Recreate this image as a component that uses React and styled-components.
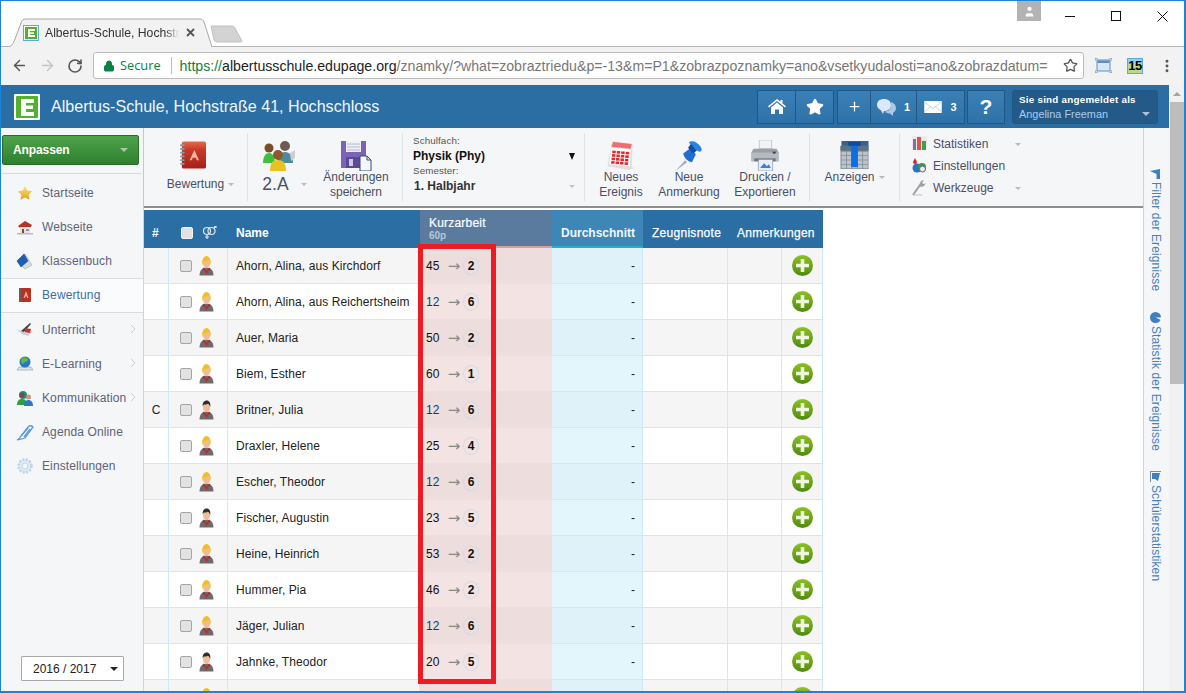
import React from 'react';
import styled, { createGlobalStyle } from 'styled-components';
import { Star, Plus, Lock, ArrowLeft, ArrowRight, RotateCw, EllipsisVertical, User } from 'lucide-react';

const Global = createGlobalStyle`
  html, body { margin: 0; padding: 0; overflow: hidden; }
  body { font-family: "Liberation Sans", Arial, sans-serif; background: #fff; }
  * { box-sizing: border-box; }
`;

const Window = styled.div`
  width: 1186px; height: 693px; border: 1px solid #1a84d8; border-right-width: 2px; border-bottom-width: 2px;
  display: flex; flex-direction: column; overflow: hidden; background: #fff; position: relative;
`;
const TabStrip = styled.div`
  height: 46px; flex: none; display: flex; align-items: flex-end; padding-left: 5px; position: relative;
  border-bottom: 1px solid #b6b6b6;
`;
const Tab = styled.div`
  position: relative; width: 206px; height: 29px; margin-bottom: -1px; display: flex; align-items: center;
  padding: 0 0 0 17px; font-size: 12.2px; color: #333; z-index: 1; flex: none;
`;
const TabShape = styled.svg` position: absolute; left: 0; top: 0; z-index: -1; `;
const TabTitle = styled.span`
  width: 134px; margin-left: 6px; white-space: nowrap; overflow: hidden;
  -webkit-mask-image: linear-gradient(90deg, #000 90%, transparent);
  mask-image: linear-gradient(90deg, #000 90%, transparent);
`;
const TabClose = styled.svg` margin-left: 7px; flex: none; `;
const NewTab = styled.svg` margin: 0 0 3px -2px; flex: none; `;
const WinButtons = styled.div`
  position: absolute; right: -1px; top: 0; display: flex; align-items: flex-start;
`;
const Profile = styled.div`
  width: 24px; height: 20px; background: #b3b3b3; color: #fff; display: flex; align-items: center; justify-content: center;
  margin-right: 6px;
`;
const WinBtn = styled.div`
  width: 46px; height: 30px; display: flex; align-items: center; justify-content: center; color: #111;
`;
const UrlRow = styled.div`
  height: 38px; flex: none; background: #f2f2f2; display: flex; align-items: flex-start; padding-top: 5px;
`;
const NavIcons = styled.div`
  width: 92px; height: 27px; flex: none; display: flex; align-items: center; justify-content: space-between; padding: 0 10px 0 10px;
`;
const UrlBox = styled.div`
  width: 991px; height: 27px; background: #fff; border: 1px solid #bdbdbd; border-radius: 3px;
  display: flex; align-items: center; padding: 0 5px 0 9px; white-space: nowrap; overflow: hidden; flex: none;
`;
const Secure = styled.span`
  color: #0b8043; margin-left: 5px; padding-right: 10px; border-right: 1px solid #bbb; line-height: 17px;
  font-family: "Open Sans", "Noto Sans", sans-serif; font-size: 12.8px;
`;
const Url = styled.span`
  color: #777; margin-left: 8px; flex: 1; overflow: hidden; font-size: 14.15px;
`;
const UrlScheme = styled.span` color: #0b8043; `;
const UrlHost = styled.span` color: #222; `;
const UrlStar = styled.span` display: flex; flex: none; margin-left: 6px; `;
const ExtIcons = styled.div` height: 27px; display: flex; align-items: center; flex: 1; padding-left: 11px; gap: 16px; `;
const ExtBadge = styled.div`
  width: 16px; height: 16px; background: linear-gradient(#8fd0ef 0 4px, #b6d98c 4px); border: 1px solid #5fa8d8;
  font-size: 13px; font-weight: 700; color: #000; display: flex; align-items: center; justify-content: center; margin-left: -1px; letter-spacing: -.5px;
`;

const Page = styled.div` flex: 1; display: flex; min-height: 0; `;
const MainCol = styled.div` flex: 1; display: flex; flex-direction: column; min-width: 0; `;
const Header = styled.div`
  height: 43px; flex: none; background: #2b6ea3; display: flex; align-items: center; padding-left: 13px; color: #fff;
`;
const LogoBox = styled.svg` flex: none; `;
const School = styled.div` font-size: 16.1px; margin-left: 11px; flex: 1; color: #f2f7fb; white-space: nowrap; `;
const HeaderBtns = styled.div` display: flex; align-items: center; margin-right: 11px; `;
const HGroup = styled.div` display: flex; margin-right: ${p => p.$mr}px; `;
const HBtn = styled.div`
  height: 34px; width: ${p => p.$w}px; background: linear-gradient(#3a7fb5, #2e72a8);
  border: 1px solid #1f5785; margin-left: -1px; display: flex; align-items: center; justify-content: center; gap: 8px;
  font-size: 11px; font-weight: 700; color: #fff; flex: none;
`;
const HelpBtn = styled(HBtn)` font-size: 21px; `;
const UserBox = styled.div`
  width: 146px; height: 34px; background: #235a88; border-radius: 3px; margin-left: 7px; padding: 2px 6px; position: relative; border: 1px solid #1f5785; flex: none;
`;
const UserTop = styled.div` font-size: 9.8px; font-weight: 700; color: #fff; letter-spacing: .25px; line-height: 13px; white-space: nowrap; `;
const UserName = styled.div` font-size: 10.9px; color: #a6cdf0; margin-top: 2px; line-height: 13px; white-space: nowrap; `;
const Caret = styled.span`
  display: inline-block; width: 0; height: 0; border-left: ${p => p.$s || 4}px solid transparent; border-right: ${p => p.$s || 4}px solid transparent;
  border-top: ${p => p.$h || p.$s || 4}px solid ${p => p.$c || '#b9b9b9'}; flex: none;
`;
const UserCaret = styled(Caret)` position: absolute; right: 7px; bottom: 7px; `;

const Body = styled.div` flex: 1; display: flex; min-height: 0; position: relative; `;
const Sidebar = styled.div`
  width: 143px; flex: none; background: #f5f6f8; border-right: 1px solid #d0d3d6; display: flex; flex-direction: column; padding-top: 7px;
`;
const GreenBtn = styled.div`
  width: 137px; height: 30px; margin-left: 1px; background: linear-gradient(#4ea34a, #2f8030); border: 1px solid #2a6d2a; border-radius: 2px;
  display: flex; align-items: center; justify-content: space-between; padding: 0 10px 0 10px; color: #fff; font-size: 12px; font-weight: 700; flex: none; letter-spacing: -.1px;
`;
const SideDivider = styled.div` height: 1px; background: #d6dade; margin: 8px 2px 2px 1px; flex: none; `;
const NavItem = styled.div`
  height: 34.15px; flex: none; display: flex; align-items: center; padding-left: 14px; font-size: 12px; letter-spacing: .12px; color: ${p => p.$active ? '#3a6fa5' : '#5d6378'};
  position: relative;
  ${p => p.$active ? 'background:#fafbfc;border-top:1px solid #d9dde0;border-bottom:1px solid #d9dde0;' : ''}
`;
const NavIcon = styled.span` width: 20px; height: 20px; flex: none; margin-right: 7px; display: flex; align-items: center; justify-content: center; `;
const Chevron = styled.svg` position: absolute; right: 7px; top: 11px; `;
const SideSpacer = styled.div` flex: 1; `;
const YearSelect = styled.div`
  width: 103px; height: 25px; margin: 0 0 10px 20px; border: 1px solid #a9a9a9; background: #fff; border-radius: 1px; display: flex; align-items: center;
  justify-content: space-between; padding: 0 5px 0 11px; font-size: 12px; color: #222; flex: none;
`;

const Center = styled.div` flex: 1; display: flex; flex-direction: column; min-width: 0; `;
const Toolbar = styled.div`
  height: 80px; flex: none; background: #f5f6f8; display: flex; align-items: stretch; padding: 5px 0; border-bottom: 2px solid #8d8d8d;
  box-shadow: 0 1px 2px rgba(0,0,0,.15);
`;
const ToolGroup = styled.div`
  display: flex; width: ${p => p.$w}px; flex: none; border-right: 1px solid #e0e2e4; justify-content: flex-start;
`;
const Tool = styled.div`
  width: ${p => p.$w}px; flex: none; display: flex; flex-direction: column; align-items: center; font-size: 12px; color: #4a4f66; text-align: center;
`;
const ToolIcon = styled.div`
  height: 29px; display: flex; align-items: center; justify-content: center; flex: none; margin: 8px ${p => p.$mr || 0}px 0 0;
`;
const ToolLabel = styled.div`
  display: flex; align-items: center; justify-content: center; gap: ${p => p.$gap ?? 4}px; white-space: nowrap;
  margin: ${p => p.$mt || 0}px 0 0 ${p => p.$ml || 0}px; font-size: ${p => p.$fs || 12}px; line-height: ${p => p.$lh || 15}px;
`;
const SubjectBox = styled.div` width: 182px; padding: 2px 8px 0 10px; flex: none; border-right: 1px solid #e0e2e4; `;
const SmallLabel = styled.div` font-size: 9.8px; color: #555; line-height: 12px; letter-spacing: .1px; `;
const SubjectVal = styled.div`
  font-size: 12px; font-weight: 700; color: ${p => p.$c || '#111'}; line-height: 18px; display: flex; justify-content: space-between; align-items: center; padding-left: ${p => p.$pl || 0}px; padding-right: 1px;
`;
const MenuList = styled.div` padding: 0 0 0 12px; width: 130px; display: flex; flex-direction: column; `;
const MenuRow = styled.div` height: 22px; display: flex; align-items: center; font-size: 12px; color: #4a4f66; `;
const MenuIcon = styled.span` width: 16px; height: 16px; display: flex; margin-right: 5px; flex: none; `;
const MenuText = styled.span` width: 82px; flex: none; `;

const Content = styled.div` flex: 1; background: #fff; padding-top: 2px; position: relative; overflow: hidden; min-height: 0; `;
const Table = styled.div`
  width: 679px; display: grid; grid-template-columns: 25px 59px 192px 132px 91px 85px 54px 41px;
`;
const TH = styled.div`
  height: 38px; background: ${p => p.$bg || '#2b6ea3'}; color: ${p => p.$c || '#fff'}; font-size: 12px; font-weight: ${p => p.$light ? 400 : 700}; display: flex; align-items: center;
  padding-left: ${p => p.$pl ?? 8}px; padding-top: 9px; white-space: nowrap; border-bottom: 2px solid ${p => p.$bb || '#2b6ea3'};
  gap: ${p => p.$gap || 0}px;
  ${p => p.$light ? 'letter-spacing: .28px; -webkit-text-stroke: .25px #fff;' : ''}
`;
const THSpan = styled(TH)` grid-column: ${p => p.$span}; `;
const THStack = styled(TH)`
  flex-direction: column; align-items: flex-start; justify-content: flex-start; padding-top: 7px; padding-left: 9px; font-weight: 400; font-size: 12px; line-height: 12px;
  letter-spacing: .2px; -webkit-text-stroke: .2px #fff;
`;
const ThSub = styled.div` font-size: 10px; color: #b7c7d7; font-weight: 700; margin-top: 1px; line-height: 12px; letter-spacing: 0; -webkit-text-stroke: 0; `;
const Cbx = styled.span`
  width: 12px; height: 12px; border-radius: 2px; background: #e2e2e2; border: 1px solid ${p => p.$h ? '#f3f3f3' : '#a5a5a5'}; flex: none; display: inline-block;
`;
const TD = styled.div`
  height: 36px; background: ${p => p.$bg}; border-right: 1px solid #cfe8fb; border-bottom: 1px solid #cfe8fb; font-size: 12px; color: #222; display: flex; align-items: center;
  justify-content: ${p => p.$j || 'flex-start'}; padding: ${p => p.$p || '0'}; white-space: nowrap; gap: ${p => p.$gap || 0}px;
  overflow: hidden; letter-spacing: ${p => p.$ls || 0}px;
`;
const GradeCell = styled(TD)` border-right: 0; padding-left: 6px; color: #111; `;
const Pts = styled.span` width: 19px; color: ${p => p.$low ? '#123a66' : '#111'}; `;
const Arrow = styled.span` color: #888; width: 18px; font-family: "DejaVu Sans", sans-serif; font-size: 15px; text-align: center; line-height: 14px; `;
const Grade = styled.span`
  width: 16px; height: 18px; border: 1px solid #cfdbe8; border-radius: 50%; font-weight: 700; font-size: 12px; display: flex; align-items: center; justify-content: center; flex: none;
`;
const RedBox = styled.div`
  position: absolute; left: 274px; top: 36px; width: 78px; height: 440px; border: 5px solid #ed1c24; pointer-events: none;
`;
const RightPanel = styled.div`
  width: 26px; flex: none; background: #f5f6f8; border-left: 1px solid #d0d3d6; display: flex; flex-direction: column; align-items: center; padding: 41px 2px 0 0;
`;
const VTab = styled.div`
  writing-mode: vertical-rl; font-size: 12px; color: #4b7fb8; display: flex; align-items: center; gap: 3px; margin-bottom: ${p => p.$mb}px; white-space: nowrap; flex: none; letter-spacing: .12px;
`;
const VIcon = styled.svg` flex: none; `;
const Scrollbar = styled.div` width: 15px; flex: none; background: #f1f1f1; display: flex; flex-direction: column; align-items: flex-end; `;
const ScrollUp = styled.div` height: 17px; width: 14px; display: flex; align-items: center; justify-content: center; flex: none; `;
const UpArrow = styled.span` width: 0; height: 0; border-left: 4px solid transparent; border-right: 4px solid transparent; border-bottom: 4px solid #a3a3a3; `;
const Thumb = styled.div` width: 14px; height: 282px; background: #bdbdbd; flex: none; `;

const Logo = () => (
  <LogoBox width="26" height="26" viewBox="0 0 26 26">
    <rect width="26" height="26" rx="1" fill="#fff" />
    <rect x="2" y="2" width="22" height="22" rx="1" fill="#54b12d" />
    <path d="M7 5h13v4h-8v2.500h7v3.500h-7v3h8v4H7z" fill="#fff" />
  </LogoBox>
);

const StarIco = () => <svg width="16" height="16" viewBox="0 0 16 16"><defs><linearGradient id="gs" x1="0" y1="0" x2="0" y2="1"><stop offset="0" stopColor="#ffe27a"/><stop offset="1" stopColor="#e0a21c"/></linearGradient></defs><path d="M8 1l2.200 4.600 5 .7-3.600 3.500.9 5L8 12.400 3.500 14.800l.9-5L.8 6.300l5-.7z" fill="url(#gs)"/></svg>;
const HouseIco = () => <svg width="16" height="16" viewBox="0 0 16 16"><path d="M1 7l7-5 7 4-2 3H3z" fill="#b5312b"/><path d="M3 8h10v6H3z" fill="#e8e2da"/><path d="M5 10h2v4H5z" fill="#7a4d3a"/><path d="M9 10h3v2H9z" fill="#7f9ab5"/><path d="M0 14h16v1.500H0z" fill="#b8bcc0"/></svg>;
const BookIco = () => <svg width="18" height="18" viewBox="0 0 18 18"><path d="M1 9l8-7 7 11-7 4z" fill="#d7dde2" stroke="#9aa4ad" strokeWidth=".6"/><path d="M1 9l7-7 4 7-7 6z" fill="#1a5fb4" stroke="#123f7c" strokeWidth=".5"/></svg>;
const RedBook = () => <svg width="12" height="14" viewBox="0 0 12 14"><rect width="12" height="14" rx="1" fill="#b8301f"/><rect width="2" height="14" fill="#6e5a55"/><path d="M7 3l2.500 7H8.200L7.700 8.500H6.300L5.800 10H4.500z" fill="#f4b19a"/></svg>;
const LessonIco = () => <svg width="18" height="16" viewBox="0 0 18 16"><path d="M1 7l7 3 9-1-5 5-6-2z" fill="#c9ced3"/><path d="M5 9l9-8 1 1-7 8z" fill="#444"/><path d="M9 6l6 1-1 4-5-1z" fill="#c3323a"/></svg>;
const GlobeIco = () => <svg width="18" height="18" viewBox="0 0 18 18"><path d="M1 15l2-3h12l2 3z" fill="#dfe4e9" stroke="#8e98a3" strokeWidth=".6"/><circle cx="9" cy="7" r="5.500" fill="#2477c9"/><path d="M6 3c3-1 6 0 6 2s-3 1-4 3-3 0-3-2z" fill="#63b83a"/></svg>;
const CommIco = () => <svg width="18" height="18" viewBox="0 0 18 18"><circle cx="7" cy="6" r="4" fill="#1c8f8a"/><circle cx="6" cy="6" r="2.500" fill="#7a4d3a"/><path d="M1 16c0-4 2-6 5-6s5 2 5 6z" fill="#2f9e3f"/><circle cx="12.500" cy="8" r="2.500" fill="#c99775"/><path d="M8 17c0-4 2-6 4.500-6s4.500 2 4.500 6z" fill="#2d76c9"/></svg>;
const PenIco = () => <svg width="18" height="18" viewBox="0 0 18 18" fill="none" stroke="#5b9bd8" strokeWidth="1.300"><path d="M1 17c2-1 3-2 4-4l7-9c2-2 4-1 5 0l-8 11c-2 1-5 1-8 2z"/><path d="M5 13l7-8M8 14l6-8"/></svg>;
const GearIco = () => <svg width="18" height="18" viewBox="0 0 18 18"><circle cx="9" cy="9" r="6.500" fill="#dfeaf5" stroke="#b9d2e8" strokeWidth="2.400" strokeDasharray="2 1.400"/><circle cx="9" cy="9" r="3" fill="#f5f6f8" stroke="#c5d8ea"/></svg>;

const AddressBook = () => (
  <svg width="26" height="29" viewBox="0 0 28 30">
    <defs><linearGradient id="ab" x1="0" y1="0" x2="0" y2="1"><stop offset="0" stopColor="#e5694a"/><stop offset=".3" stopColor="#c93a27"/><stop offset="1" stopColor="#a5201a"/></linearGradient></defs>
    <rect x="2" y="0" width="26" height="29" rx="2" fill="url(#ab)"/>
    {[3, 7, 11, 15, 19, 23].map(y => <rect key={y} x="0" y={y} width="5" height="2" rx="1" fill="#8c97a5"/>)}
    <path d="M15.500 9l5 11h-2.400l-1-2.500h-3.400l-1 2.500h-2.400z" fill="#f0b89f"/>
  </svg>
);
const People = () => (
  <svg width="32" height="32" viewBox="0 0 32 30">
    <circle cx="22" cy="5" r="5" fill="#6e5a50"/><path d="M14 22c0-7 3-11 8-11s8 4 8 11z" fill="#4d8aa0"/>
    <path d="M27 12l5-3v8l-4 3z" fill="#c9ced2"/>
    <circle cx="6" cy="7" r="4.500" fill="#7a4d2a"/><path d="M0 22c0-7 3-10 6-10s6 3 6 10z" fill="#3fc03b"/>
    <circle cx="15" cy="14" r="5" fill="#8a5a30"/><path d="M7 30c0-8 3-11 8-11s8 3 8 11z" fill="#e8c320"/>
  </svg>
);
const Floppy = () => (
  <svg width="32" height="30" viewBox="0 0 32 30">
    <path d="M1 0h25v24l-3 3H1z" fill="#7b64b5"/><rect x="6" y="0" width="15" height="11" fill="#eef0f4"/>
    <path d="M7 3h13M7 6h13M7 9h13" stroke="#b8bcc8"/><rect x="6" y="16" width="14" height="11" fill="#5d4a96"/><rect x="9" y="18" width="4" height="7" fill="#cfc7e6"/>
    <path d="M20 15h7l4 4v11H20z" fill="#f3f6fb" stroke="#3c4a70"/><path d="M27 15v4h4" fill="none" stroke="#3c4a70"/>
  </svg>
);
const Calendar = () => (
  <svg width="30" height="31" viewBox="0 0 30 32">
    <path d="M6 1l21 3-1 24 3 1-6 2L1 27z" fill="#dfe0de"/>
    <path d="M7 2l19 2-1 5L5 7z" fill="#ef6d72"/>
    <path d="M5 8l20 2-1 17-21-2z" fill="#fff"/>
    {[0, 1, 2, 3].map(r => [0, 1, 2, 3].map(c => <rect key={r + '-' + c} x={6 + c * 4.600 - r * .4} y={11 + r * 3.600 + c * .4} width="3.600" height="2.700" fill="#e02a31"/>))}
  </svg>
);
const Pin = () => (
  <svg width="28" height="31" viewBox="0 0 28 32">
    <path d="M0 32l10-11 2 2z" fill="#a9adb1"/>
    <path d="M8 14l8-6 5 7-4 8c-3 0-8-4-9-9z" fill="#1f6fd0"/>
    <path d="M14 2c3-2 9 0 12 5 2 3 1 5-1 5s-9-5-11-10z" fill="#2a83e0"/>
    <path d="M16 4l6 7-4 3-5-6z" fill="#114f9f"/>
  </svg>
);
const Printer = () => (
  <svg width="30" height="31" viewBox="0 0 30 32">
    <rect x="9" y="0" width="13" height="9" fill="#f2f3f4" stroke="#aab0b6" strokeWidth=".6"/>
    <path d="M3 9h24l2 4v9H1v-9z" fill="#9aa0a6"/>
    <rect x="1" y="13" width="28" height="9" fill="#b5babf"/><rect x="4" y="19" width="22" height="3" fill="#6c7278"/>
    <rect x="23" y="12" width="3" height="2" fill="#3c4043"/>
    <rect x="8" y="20" width="15" height="12" fill="#e9eef5" stroke="#6b8ab5" strokeWidth=".6"/>
    <path d="M10 29l4-5 3 3 2-2 2 4z" fill="#3d7fd4"/>
  </svg>
);
const TableIco = () => (
  <svg width="29" height="29" viewBox="0 0 29 30">
    <rect x="1" y="0" width="28" height="6" fill="#3b5f8f"/><rect y="5" width="29" height="24" fill="#7e8892"/>
    <rect y="5" width="29" height="5" fill="#5d7185"/>
    {[0, 1, 2, 3].map(r => [0, 1, 2, 3, 4].map(c => <rect key={r + 'x' + c} x={1 + c * 5.600} y={11 + r * 4.500} width="4.800" height="3.800" fill="#bcc4cb"/>))}
    <rect x="11" y="2" width="7" height="25" fill="#0b6fe0"/>
    <rect x="8" y="1" width="13" height="4" fill="#0b4ea0"/>
  </svg>
);
const Bars = () => <svg width="15" height="14" viewBox="0 0 15 14"><rect width="15" height="14" fill="#e9eaec"/><rect x="1" y="3" width="3" height="11" fill="#8b6aa8"/><rect x="5" y="1" width="4" height="13" fill="#d9534f"/><rect x="10" y="5" width="4" height="9" fill="#3f9e53"/></svg>;
const Settings2 = () => <svg width="15" height="15" viewBox="0 0 15 15"><path d="M3 0l2 4a2 2 0 1 1-4 0z" fill="#d9232c"/><circle cx="5" cy="10" r="4.500" fill="#2c72c7"/><circle cx="10" cy="9" r="4" fill="#3e9b47"/><circle cx="10.500" cy="11" r="3" fill="#e8eaec" stroke="#666"/></svg>;
const Wrench = () => <svg width="14" height="16" viewBox="0 0 14 16" fill="none"><path d="M1 15L8 5" stroke="#9c9fa3" strokeWidth="2"/><path d="M7 5l2-4 3-1-2 3 2 1 2-1-2 3-3 1z" fill="#9c9fa3"/><path d="M1 15h9" stroke="#c0c2c5"/></svg>;

const Student = ({ g }) => (
  <svg width="15" height="20" viewBox="0 0 15 20">
    <path d="M.5 19.500c0-5 2.500-8 7-8s7 3 7 8z" fill="#6c6c6c"/>
    <ellipse cx="7.500" cy="7" rx="3.500" ry="4.500" fill="#eebd95"/>
    <path d="M4.500 11.500l3 3.500 3-3.500 1 2-2.800 2-1.200 3-1.200-3-2.800-2z" fill="#c8202c"/>
    {g === 'm'
      ? <path d="M3.800 7C3 2.500 5.500.5 7.800.5s4.200 2.300 3.400 6.500c-.5-2-1.500-3-2.500-3.300-1 .6-2.700.9-3.700.9-.7.5-1.200 1.400-1.700 2.400z" fill="#2c2c2c"/>
      : <path d="M3.500 9.500C2.300 3.500 5 0 7.500 0s5.200 3.500 4 9.500c-.3-2.800-1.300-5-2.300-5.700-1 1-3 1.500-4.200 1.700-.7.800-1.200 2.300-1.500 4z" fill="#f0c020"/>}
  </svg>
);
const PlusBtn = () => (
  <svg width="21" height="21" viewBox="0 0 21 21">
    <defs><linearGradient id="pg" x1="0" y1="0" x2="0" y2="1"><stop offset="0" stopColor="#8dc21f"/><stop offset="1" stopColor="#4f8a12"/></linearGradient></defs>
    <circle cx="10.500" cy="10.500" r="10.500" fill="url(#pg)"/>
    <path d="M8.700 4h3.600v4.700H17v3.600h-4.700V17H8.700v-4.700H4V8.700h4.700z" fill="#eef6dd"/>
  </svg>
);
const HomeIco = () => <svg width="18" height="15" viewBox="0 0 18 15"><path d="M9 0l3.500 2.800V1h2v3.400L18 7.300l-1 1.200L9 2 1 8.500 0 7.300z" fill="#fff"/><path d="M3 8.500L9 3.500l6 5V15h-4v-4.500H7V15H3z" fill="#fff"/></svg>;
const Chat = () => <svg width="19" height="18" viewBox="0 0 19 18"><path d="M7 1c4 0 7 2 7 6s-3 6-7 6l-1 3-2-3.500C2 11 0 9.500 0 7c0-4 3-6 7-6z" fill="#dbe9f6"/><path d="M14 4c3 1 5 3 5 6s-2 4-3 5v3l-3-2.500c-2 0-4-.5-5-2 4 0 7-3 6-9.500z" fill="#a9c9e6"/></svg>;
const Mail = () => <svg width="18" height="12" viewBox="0 0 19 13"><rect width="19" height="13" fill="#fff"/><path d="M0 1l9.500 7L19 1M0 12l7-6M19 12l-7-6" fill="none" stroke="#a9c5df" strokeWidth=".8"/></svg>;

const rows = [
  ['', 'f', 'Ahorn, Alina, aus Kirchdorf', 45, 2],
  ['', 'f', 'Ahorn, Alina, aus Reichertsheim', 12, 6],
  ['', 'f', 'Auer, Maria', 50, 2],
  ['', 'f', 'Biem, Esther', 60, 1],
  ['C', 'm', 'Britner, Julia', 12, 6],
  ['', 'f', 'Draxler, Helene', 25, 4],
  ['', 'f', 'Escher, Theodor', 12, 6],
  ['', 'm', 'Fischer, Augustin', 23, 5],
  ['', 'f', 'Heine, Heinrich', 53, 2],
  ['', 'f', 'Hummer, Pia', 46, 2],
  ['', 'f', 'Jäger, Julian', 12, 6],
  ['', 'm', 'Jahnke, Theodor', 20, 5],
  ['', 'f', '', null, null],
];

const navItems = [
  ['Startseite', <StarIco />], ['Webseite', <HouseIco />], ['Klassenbuch', <BookIco />],
  ['Bewertung', <RedBook />, false, true], ['Unterricht', <LessonIco />, true], ['E-Learning', <GlobeIco />, true],
  ['Kommunikation', <CommIco />, true], ['Agenda Online', <PenIco />], ['Einstellungen', <GearIco />],
];

export default function App() {
  return (
    <Window>
      <Global />
      <TabStrip>
        <Tab>
          <TabShape width="206" height="29" viewBox="0 0 206 29">
            <path d="M0 29C6 29 7 26 9 21L15 5C16 2 17 1 20 1H194C196 1 197 2 198 4L206 29" fill="#f2f2f2" stroke="#a8a8a8" />
          </TabShape>
          <svg width="16" height="16" viewBox="0 0 16 16"><rect width="16" height="16" fill="#5aa9e6"/><rect x="1" y="1" width="14" height="14" fill="#fff"/><rect x="2" y="2" width="12" height="12" fill="#54b12d"/><path d="M5 4h7v2H7v1.200h4V9H7v1h5v2H5z" fill="#fff"/></svg>
          <TabTitle>Albertus-Schule, Hochstraße 41</TabTitle>
          <TabClose width="9" height="9" viewBox="0 0 9 9"><path d="M1 1l7 7M8 1L1 8" stroke="#555" strokeWidth="1.800"/></TabClose>
        </Tab>
        <NewTab width="33" height="18" viewBox="0 0 33 18"><path d="M1 1h21q2 0 3 2l7 13q0 1-2 1H7q-2 0-3-2z" fill="#d3d3d3" stroke="#c2c2c2"/></NewTab>
        <WinButtons>
          <Profile><User size={13} fill="#fff" strokeWidth={0} /></Profile>
          <WinBtn><svg width="10" height="10" viewBox="0 0 10 10"><path d="M0 5.500h10" stroke="#111"/></svg></WinBtn>
          <WinBtn><svg width="10" height="10" viewBox="0 0 10 10"><rect x=".5" y=".5" width="9" height="9" fill="none" stroke="#111"/></svg></WinBtn>
          <WinBtn><svg width="11" height="11" viewBox="0 0 11 11"><path d="M.5.5l10 10M10.500.5l-10 10" stroke="#111"/></svg></WinBtn>
        </WinButtons>
      </TabStrip>
      <UrlRow>
        <NavIcons>
          <ArrowLeft size={17} color="#555" strokeWidth={2} />
          <ArrowRight size={17} color="#c4c4c4" strokeWidth={2} />
          <RotateCw size={16} color="#555" strokeWidth={2.400} />
        </NavIcons>
        <UrlBox>
          <Lock size={12} color="#0b8043" fill="#0b8043" />
          <Secure>Secure</Secure>
          <Url><UrlScheme>https://</UrlScheme><UrlHost>albertusschule.edupage.org</UrlHost>/znamky/?what=zobraztriedu&amp;p=-13&amp;m=P1&amp;zobrazpoznamky=ano&amp;vsetkyudalosti=ano&amp;zobrazdatum=</Url>
          <UrlStar><Star size={15} color="#555" strokeWidth={2} /></UrlStar>
        </UrlBox>
        <ExtIcons>
          <svg width="17" height="15" viewBox="0 0 17 15" fill="none"><rect x="2" y="2" width="13" height="11" fill="#d6e8f7" stroke="#5f8fbd"/><rect x="2.500" y="2.500" width="12" height="2.500" fill="#5f8fbd"/><path d="M0 3V0h3M14 0h3v3M0 12v3h3M17 12v3h-3" stroke="#5f8fbd"/></svg>
          <ExtBadge>15</ExtBadge>
          <EllipsisVertical size={16} color="#555" strokeWidth={2.400} />
        </ExtIcons>
      </UrlRow>
      <Page>
        <MainCol>
          <Header>
            <Logo />
            <School>Albertus-Schule, Hochstraße 41, Hochschloss</School>
            <HeaderBtns>
              <HGroup $mr={4}>
                <HBtn $w={39}><HomeIco /></HBtn>
                <HBtn $w={39}><Star size={18} fill="#fff" color="#fff" /></HBtn>
              </HGroup>
              <HGroup $mr={3}>
                <HBtn $w={34}><Plus size={15} color="#fff" strokeWidth={2} /></HBtn>
                <HBtn $w={47}><Chat />1</HBtn>
                <HBtn $w={49}><Mail />3</HBtn>
              </HGroup>
              <HelpBtn $w={38}>?</HelpBtn>
              <UserBox>
                <UserTop>Sie sind angemeldet als</UserTop>
                <UserName>Angelina Freeman</UserName>
                <UserCaret $c="#a9c3da" />
              </UserBox>
            </HeaderBtns>
          </Header>
          <Body>
            <Sidebar>
              <GreenBtn>Anpassen<Caret $c="#a8c8a8" /></GreenBtn>
              <SideDivider />
              {navItems.map(([label, icon, chev, active]) => (
                <NavItem key={label} $active={active}>
                  <NavIcon>{icon}</NavIcon>{label}
                  {chev && <Chevron width="6" height="10" viewBox="0 0 6 10"><path d="M1 1l4 4-4 4" fill="none" stroke="#c9ccd0" /></Chevron>}
                </NavItem>
              ))}
              <SideSpacer />
              <YearSelect>2016 / 2017<Caret $s={4} $c="#222" /></YearSelect>
            </Sidebar>
            <Center>
              <Toolbar>
                <ToolGroup $w={104}>
                  <Tool $w={103}>
                    <ToolIcon $mr={6}><AddressBook /></ToolIcon>
                    <ToolLabel $mt={7} $ml={10}>Bewertung<Caret $s={3.500} /></ToolLabel>
                  </Tool>
                </ToolGroup>
                <ToolGroup $w={155}>
                  <Tool $w={62}>
                    <ToolIcon><People /></ToolIcon>
                    <ToolLabel $fs={17.5} $lh={18} $mt={5} $ml={11} $gap={12}>2.A<Caret $s={3.500} /></ToolLabel>
                  </Tool>
                  <Tool $w={92}>
                    <ToolIcon><Floppy /></ToolIcon>
                    <ToolLabel>Änderungen</ToolLabel>
                    <ToolLabel>speichern</ToolLabel>
                  </Tool>
                </ToolGroup>
                <SubjectBox>
                  <SmallLabel>Schulfach:</SmallLabel>
                  <SubjectVal>Physik (Phy)<Caret $s={3.500} $h={7} $c="#111" /></SubjectVal>
                  <SmallLabel>Semester:</SmallLabel>
                  <SubjectVal $c="#333" $pl={1}>1. Halbjahr<Caret $s={3.500} $c="#c4c4c4" /></SubjectVal>
                </SubjectBox>
                <ToolGroup $w={225}>
                  <Tool $w={72}>
                    <ToolIcon><Calendar /></ToolIcon>
                    <ToolLabel>Neues</ToolLabel><ToolLabel>Ereignis</ToolLabel>
                  </Tool>
                  <Tool $w={64}>
                    <ToolIcon><Pin /></ToolIcon>
                    <ToolLabel>Neue</ToolLabel><ToolLabel>Anmerkung</ToolLabel>
                  </Tool>
                  <Tool $w={88}>
                    <ToolIcon><Printer /></ToolIcon>
                    <ToolLabel>Drucken /</ToolLabel><ToolLabel>Exportieren</ToolLabel>
                  </Tool>
                </ToolGroup>
                <ToolGroup $w={90}>
                  <Tool $w={89}>
                    <ToolIcon><TableIco /></ToolIcon>
                    <ToolLabel $mt={0}>Anzeigen<Caret $s={3.500} /></ToolLabel>
                  </Tool>
                </ToolGroup>
                <MenuList>
                  <MenuRow><MenuIcon><Bars /></MenuIcon><MenuText>Statistiken</MenuText><Caret $s={3.500} /></MenuRow>
                  <MenuRow><MenuIcon><Settings2 /></MenuIcon><MenuText>Einstellungen</MenuText></MenuRow>
                  <MenuRow><MenuIcon><Wrench /></MenuIcon><MenuText>Werkzeuge</MenuText><Caret $s={3.500} /></MenuRow>
                </MenuList>
              </Toolbar>
              <Content>
                <Table>
                  <TH>#</TH>
                  <TH $pl={12} $gap={9}>
                    <Cbx $h />
                    <svg width="15" height="13" viewBox="0 0 15 13" fill="none" stroke="#dfe9f2" strokeWidth="1.200"><circle cx="5" cy="5" r="3.500"/><circle cx="9.500" cy="5" r="3.500"/><path d="M5 8.500V13M3 11h4M12 2l2-2m-2 0h2v2"/></svg>
                  </TH>
                  <TH>Name</TH>
                  <THStack $bg="#5a7a9e" $bb="#e09a9a">Kurzarbeit<ThSub>60p</ThSub></THStack>
                  <TH $bg="#3d86b5" $bb="#1fb0cf" $c="#f2f7fb" $pl={9}>Durchschnitt</TH>
                  <TH $light $pl={9}>Zeugnisnote</TH>
                  <THSpan $span="span 2" $pl={9} $light>Anmerkungen</THSpan>
                  {rows.map(([tag, g, name, pts, grade], i) => {
                    const odd = i % 2 === 0;
                    const base = odd ? '#f5f5f5' : '#fff';
                    return (
                      <React.Fragment key={i}>
                        <TD $bg={base} $j="center">{tag}</TD>
                        <TD $bg={base} $p="0 0 0 11px" $gap={7}><Cbx /><Student g={g} /></TD>
                        <TD $bg={base} $p="0 0 0 8px" $ls={0.09}>{name}</TD>
                        <GradeCell $bg={odd ? '#eddddd' : '#f3e3e3'}>
                          {pts != null && <><Pts $low={pts < 20}>{pts}</Pts><Arrow>→</Arrow><Grade>{grade}</Grade></>}
                        </GradeCell>
                        <TD $bg={odd ? '#dff2f9' : '#e3f6fc'} $j="flex-end" $p="0 7px 0 0">{pts != null && '-'}</TD>
                        <TD $bg={base} />
                        <TD $bg={base} />
                        <TD $bg={base} $j="center"><PlusBtn /></TD>
                      </React.Fragment>
                    );
                  })}
                </Table>
                <RedBox />
              </Content>
            </Center>
            <RightPanel>
              <VTab $mb={21}><VIcon width="11" height="10" viewBox="0 0 11 10"><path d="M0 2L10 0v10H6.500V5z" fill="#3f7fc0"/></VIcon>Filter der Ereignisse</VTab>
              <VTab $mb={20}><VIcon width="11" height="11" viewBox="0 0 11 11"><circle cx="5.500" cy="5.500" r="5.500" fill="#3f7fc0"/><path d="M5.500 5.500H11V8z" fill="#fff"/></VIcon>Statistik der Ereignisse</VTab>
              <VTab $mb={0}><VIcon width="11" height="11" viewBox="0 0 11 11"><path d="M0 0h11v1H1v10H0z" fill="#7a8da3"/><path d="M2 2h8l-2 8-3-2H2z" fill="#3f7fc0"/></VIcon>Schülerstatistiken</VTab>
            </RightPanel>
          </Body>
        </MainCol>
        <Scrollbar>
          <ScrollUp><UpArrow /></ScrollUp>
          <Thumb />
        </Scrollbar>
      </Page>
    </Window>
  );
}
